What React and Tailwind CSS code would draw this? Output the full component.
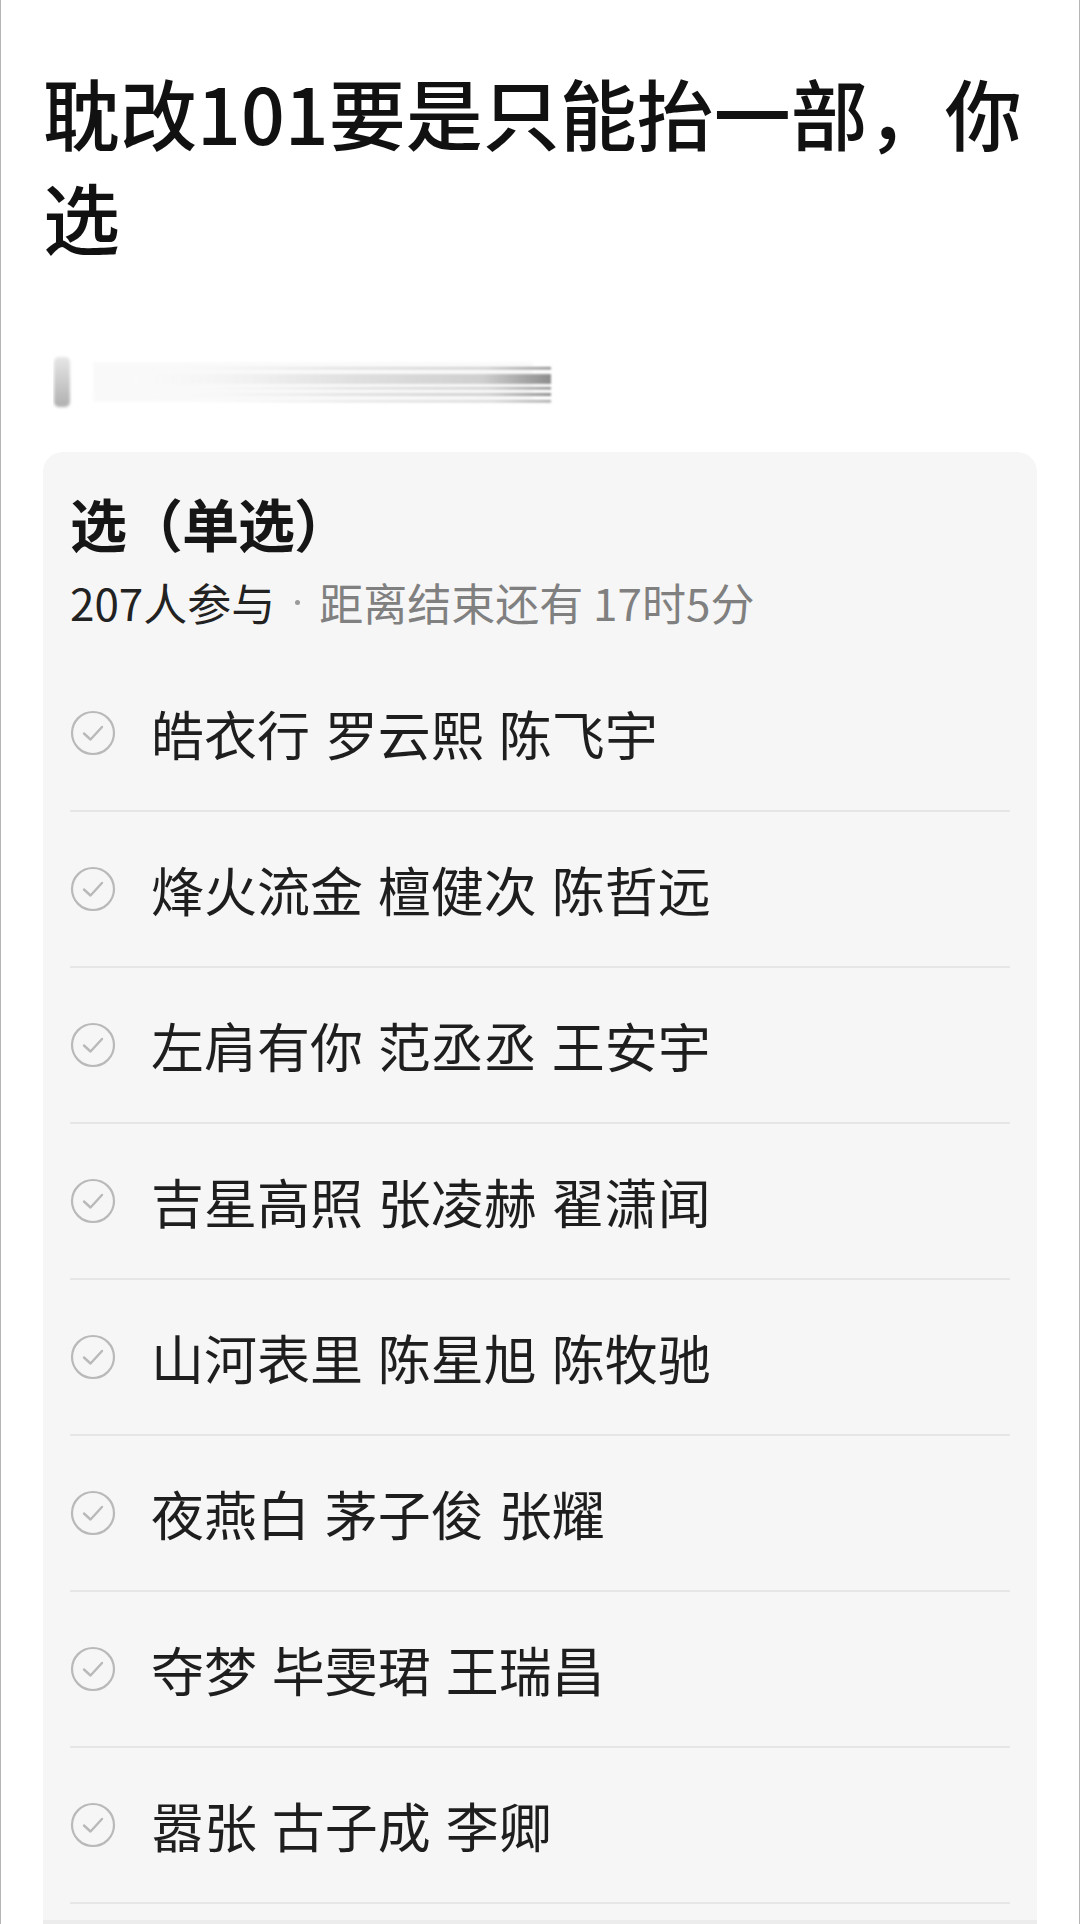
import React from "react";

const options = [
  "皓衣行 罗云熙 陈飞宇",
  "烽火流金 檀健次 陈哲远",
  "左肩有你 范丞丞 王安宇",
  "吉星高照 张凌赫 翟潇闻",
  "山河表里 陈星旭 陈牧驰",
  "夜燕白 茅子俊 张耀",
  "夺梦 毕雯珺 王瑞昌",
  "嚣张 古子成 李卿",
];

function CheckCircle() {
  return (
    <svg width="46" height="46" viewBox="0 0 46 46" className="shrink-0">
      <circle cx="23" cy="23" r="21" fill="none" stroke="#b9b9b9" strokeWidth="2.2" />
      <path d="M14 23.5 L20.5 29.5 L32 17" fill="none" stroke="#b9b9b9" strokeWidth="2.4" strokeLinecap="round" strokeLinejoin="round" />
    </svg>
  );
}

function BlurredName() {
  return (
    <svg width="500" height="56" viewBox="0 0 500 56" className="block">
      <defs>
        <filter id="b1" x="-20%" y="-50%" width="140%" height="200%">
          <feGaussianBlur stdDeviation="1.4" />
        </filter>
        <filter id="b2" x="-5%" y="-100%" width="110%" height="300%">
          <feGaussianBlur stdDeviation="0.9" />
        </filter>
        <linearGradient id="vbar" x1="0" y1="0" x2="0" y2="1">
          <stop offset="0" stopColor="#e6e6e6" />
          <stop offset="1" stopColor="#b0b0b0" />
        </linearGradient>
        <linearGradient id="streak" x1="0" y1="0" x2="1" y2="0">
          <stop offset="0" stopColor="#ffffff" stopOpacity="0" />
          <stop offset="0.5" stopColor="#e4e4e4" />
          <stop offset="0.85" stopColor="#cfcfcf" />
          <stop offset="1" stopColor="#8d8d8d" />
        </linearGradient>
      </defs>
      <rect x="1" y="3" width="16" height="50" rx="5" fill="url(#vbar)" filter="url(#b1)" />
      <rect x="40" y="8" width="440" height="40" fill="#f7f7f7" filter="url(#b1)" opacity="0.7" />
      <g filter="url(#b2)">
        <rect x="60" y="13" width="438" height="2.5" fill="url(#streak)" />
        <rect x="40" y="20" width="458" height="10" fill="url(#streak)" />
        <rect x="80" y="33" width="418" height="2.5" fill="url(#streak)" />
        <rect x="80" y="39" width="418" height="3" fill="url(#streak)" />
        <rect x="100" y="46" width="398" height="2.5" fill="url(#streak)" opacity="0.8" />
      </g>
    </svg>
  );
}

export default function App() {
  return (
    <div
      className="w-[1080px] h-[1924px] overflow-hidden bg-white border-x border-[#b4b4b4] flex flex-col"
      style={{ fontFamily: '"Noto Sans CJK SC", "Noto Sans", sans-serif' }}
    >
      <div className="pl-[42px] pr-[30px] pt-[60px]">
        <h1 className="text-[77px] leading-[104px] font-medium text-[#111]">
          耽改101要是只能抬一部，你选
        </h1>
      </div>
      <div className="pl-[52px] mt-[86px] h-[56px]">
        <BlurredName />
      </div>
      <div className="mx-[42px] mt-[42px] flex-1 bg-[#f6f6f6] rounded-t-[20px] px-[27px] pt-[33px] border-b-[4px] border-[#ececec]">
        <div className="text-[57px] leading-[74px] font-bold text-[#161616] tracking-[-1px]">选（单选）</div>
        <div className="mt-[14px] flex items-center text-[44px] leading-[58px] text-[#222]">
          <span>207人参与</span>
          <span className="ml-[20px] w-[5px] h-[5px] rounded-full bg-[#9a9a9a]" />
          <span className="ml-[19px] text-[#808080]">距离结束还有 17时5分</span>
        </div>
        <div className="mt-[25px]">
          {options.map((o) => (
            <div key={o} className="h-[156px] flex items-center border-b-2 border-[#e6e6e6]">
              <CheckCircle />
              <span className="ml-[35px] text-[53px] leading-none text-[#1e1e1e] [word-spacing:3px]">{o}</span>
            </div>
          ))}
        </div>
      </div>
    </div>
  );
}
